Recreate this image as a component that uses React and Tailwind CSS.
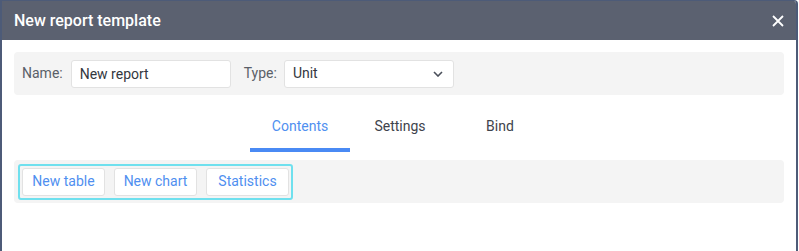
import React, { useState } from 'react';

const tabs = ['Contents', 'Settings', 'Bind'];

const App = () => {
  const [tab, setTab] = useState('Contents');
  const [name, setName] = useState('New report');

  return (
    <div className="w-[799px] h-[251px] bg-white overflow-hidden" style={{ fontFamily: 'Roboto, "Liberation Sans", sans-serif' }}>
      <div className="w-[798px] h-[251px] flex flex-col bg-white border-l-2 border-r-2 border-t border-[#4d5b78] rounded-tr-[4px] overflow-hidden">
        <div className="h-[39px] shrink-0 bg-[#5b6170] flex items-center justify-between pl-[12px] pr-[12px]">
          <span className="text-white text-[16px] font-medium">New report template</span>
          <svg width="12" height="12" viewBox="0 0 12 12" className="text-white">
            <path d="M1 1L11 11M11 1L1 11" stroke="currentColor" strokeWidth="1.8" />
          </svg>
        </div>

        <div className="px-[12px] pt-[12px]">
          <div className="h-[43px] bg-[#f4f4f4] rounded-[4px] flex items-center pl-[8px] text-[14px]">
            <label className="text-[#5a5f68] mr-[8px]">Name:</label>
            <input
              className="w-[160px] h-[28px] bg-white border border-[#e2e2e2] rounded-[3px] px-[8px] text-[#33373e] outline-none"
              value={name}
              onChange={(e) => setName(e.target.value)}
            />
            <label className="text-[#5a5f68] ml-[13px] mr-[7px]">Type:</label>
            <div className="w-[170px] h-[28px] bg-white border border-[#e2e2e2] rounded-[3px] pl-[8px] pr-[10px] flex items-center justify-between text-[#33373e]">
              <span>Unit</span>
              <svg width="10" height="6" viewBox="0 0 10 6">
                <path d="M1 1L5 5L9 1" fill="none" stroke="#4a4f5a" strokeWidth="1.6" />
              </svg>
            </div>
          </div>

          <div className="flex justify-center mt-[13px] pl-[2px]">
            {tabs.map((t) => (
              <button
                key={t}
                onClick={() => setTab(t)}
                className={
                  'w-[100px] h-[44px] text-[14px] pb-[4px] border-b-4 ' +
                  (tab === t ? 'text-[#4f8ff0] border-[#4a8af4]' : 'text-[#3e434c] border-transparent')
                }
              >
                {t}
              </button>
            ))}
          </div>

          <div className="h-[43px] mt-[8px] bg-[#f4f4f4] rounded-[4px] flex items-center pl-[4px]">
            <div className="h-[36px] border-2 border-[#6fe0ee] rounded-[3px] flex items-center gap-[9px] px-[2px]">
              {['New table', 'New chart', 'Statistics'].map((b) => (
                <button
                  key={b}
                  className="w-[83px] h-[28px] bg-white border border-[#e2e2e2] rounded-[3px] text-[14px] text-[#4f8ff0]"
                >
                  {b}
                </button>
              ))}
            </div>
          </div>
        </div>
      </div>
    </div>
  );
};

export default App;
